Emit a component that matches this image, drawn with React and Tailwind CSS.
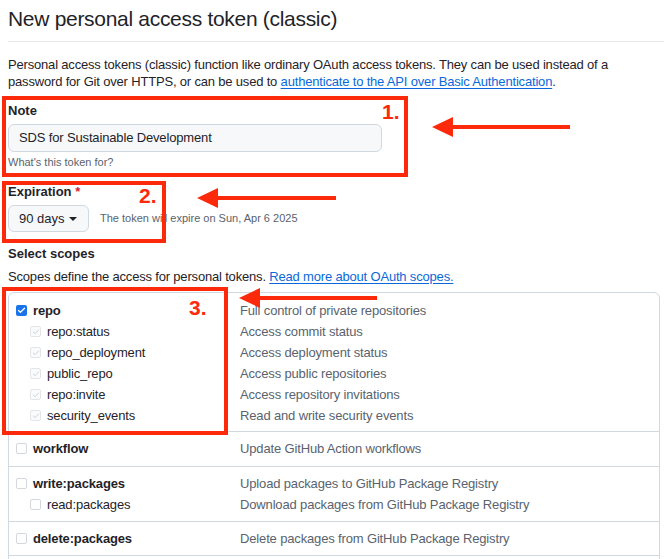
import { Check } from "lucide-react";

const RED = "#fc2a0b";

const scopes = [
  {
    items: [
      { name: "repo", desc: "Full control of private repositories", state: "on" },
      { name: "repo:status", desc: "Access commit status", sub: true, state: "implied" },
      { name: "repo_deployment", desc: "Access deployment status", sub: true, state: "implied" },
      { name: "public_repo", desc: "Access public repositories", sub: true, state: "implied" },
      { name: "repo:invite", desc: "Access repository invitations", sub: true, state: "implied" },
      { name: "security_events", desc: "Read and write security events", sub: true, state: "implied" },
    ],
    pad: "pt-[7px] pb-[5px]",
  },
  {
    items: [{ name: "workflow", desc: "Update GitHub Action workflows", state: "off" }],
    pad: "pt-[6px] pb-[7px]",
  },
  {
    items: [
      { name: "write:packages", desc: "Upload packages to GitHub Package Registry", state: "off" },
      { name: "read:packages", desc: "Download packages from GitHub Package Registry", sub: true, state: "off" },
    ],
    pad: "pt-[6px] pb-[6px]",
  },
  {
    items: [{ name: "delete:packages", desc: "Delete packages from GitHub Package Registry", state: "off" }],
    pad: "pt-[6px] pb-[6px]",
  },
];

function Box({ state }) {
  if (state === "on") {
    return (
      <span className="flex h-[11px] w-[11px] items-center justify-center rounded-[2px] bg-[#1a73e8]">
        <Check size={9} strokeWidth={3.5} className="text-white" />
      </span>
    );
  }
  if (state === "implied") {
    return (
      <span className="flex h-[11px] w-[11px] items-center justify-center rounded-[2px] border border-[#e3e6e9] bg-[#fafbfc]">
        <Check size={8} strokeWidth={2.5} className="text-[#c4c8cc]" />
      </span>
    );
  }
  return <span className="block h-[11px] w-[11px] rounded-[2px] border border-[#d3d8dd] bg-white" />;
}

function Arrow({ className, width }) {
  return (
    <svg className={className} width={width} height="22" viewBox={`0 0 ${width} 22`}>
      <polygon points={`0,11 21,1 21,21`} fill={RED} />
      <rect x="18" y="9" width={width - 18} height="4" fill={RED} />
    </svg>
  );
}

export default function App() {
  return (
    <div className="relative min-h-[559px] overflow-hidden bg-white pl-2 font-['Liberation_Sans',Arial,sans-serif] text-[#1f2328]">
      <div className="border-b border-[#e6e9ec] pt-[5px] pb-[8px]">
        <h1 className="text-[21px] leading-[28px] font-normal tracking-[-0.3px]">New personal access token (classic)</h1>
      </div>

      <p className="mt-[14px] whitespace-nowrap text-[13px] leading-[17px] tracking-[-0.18px]">
        Personal access tokens (classic) function like ordinary OAuth access tokens. They can be used instead of a
        <br />
        password for Git over HTTPS, or can be used to{" "}
        <a className="text-[#0969da] underline underline-offset-2">authenticate to the API over Basic Authentication</a>.
      </p>

      <div className="mt-[13px] text-[13px] leading-[16px] font-bold">Note</div>
      <div className="mt-[5px] flex h-[28px] w-[374px] items-center rounded-[6px] border border-[#d1d9e0] bg-[#f6f8fa] px-[10px] text-[13px] tracking-[-0.15px]">
        SDS for Sustainable Development
      </div>
      <div className="mt-[3px] text-[11px] leading-[14px] text-[#59636e]">What's this token for?</div>

      <div className="mt-[15px] text-[13px] leading-[16px] font-bold">
        Expiration <span className="text-[#d1242f]">*</span>
      </div>
      <div className="mt-[5px] flex h-[27px] items-center gap-[11px]">
        <div className="flex h-[27px] w-[81px] shrink-0 items-center justify-between whitespace-nowrap rounded-[6px] border border-[#d1d9e0] bg-[#f6f8fa] pl-[10px] pr-[11px] text-[13px]">
          90 days
          <svg width="8" height="4" viewBox="0 0 8 4">
            <polygon points="0,0 8,0 4,4" fill="#1f2328" />
          </svg>
        </div>
        <span className="whitespace-nowrap text-[11px] text-[#59636e]">The token will expire on Sun, Apr 6 2025</span>
      </div>

      <div className="mt-[14px] text-[13px] leading-[16px] font-bold">Select scopes</div>
      <p className="mt-[6px] text-[13px] leading-[17px] tracking-[-0.18px]">
        Scopes define the access for personal tokens.{" "}
        <a className="text-[#0969da] underline underline-offset-2">Read more about OAuth scopes.</a>
      </p>

      <div className="mt-[7px] mr-[4px] rounded-t-[6px] border border-[#d1d9e0]">
        {scopes.map((group, i) => (
          <div key={i} className={`${i > 0 ? "border-t border-[#d1d9e0]" : ""} ${group.pad} pl-[7px]`}>
            {group.items.map((s) => (
              <div key={s.name} className="grid h-[21px] grid-cols-[224px_1fr] items-center text-[13px] tracking-[-0.15px]">
                <div className={`flex items-center gap-[6px] ${s.sub ? "pl-[14px]" : ""}`}>
                  <Box state={s.state} />
                  <span className={s.sub ? "" : "font-bold"}>{s.name}</span>
                </div>
                <span className="text-[#59636e]">{s.desc}</span>
              </div>
            ))}
          </div>
        ))}
        <div className="h-[10px] border-t border-[#d1d9e0]" />
      </div>

      {/* annotations */}
      <div className="absolute left-[2px] top-[96px] h-[81px] w-[406px] border-[4px] border-[#fc2a0b]" />
      <div className="absolute left-[2px] top-[181px] h-[62px] w-[164px] border-[4px] border-[#fc2a0b]" />
      <div className="absolute left-[2px] top-[287px] h-[148px] w-[226px] border-[4px] border-[#fc2a0b]" />

      <span className="absolute left-[382px] top-[100px] text-[21px] leading-[24px] font-bold text-[#fc2a0b]">1.</span>
      <span className="absolute left-[139px] top-[184px] text-[21px] leading-[24px] font-bold text-[#fc2a0b]">2.</span>
      <span className="absolute left-[189px] top-[296px] text-[21px] leading-[24px] font-bold text-[#fc2a0b]">3.</span>

      <Arrow className="absolute left-[432px] top-[116px]" width={138} />
      <Arrow className="absolute left-[197px] top-[187px]" width={139} />
      <Arrow className="absolute left-[239px] top-[287px]" width={138} />
    </div>
  );
}
